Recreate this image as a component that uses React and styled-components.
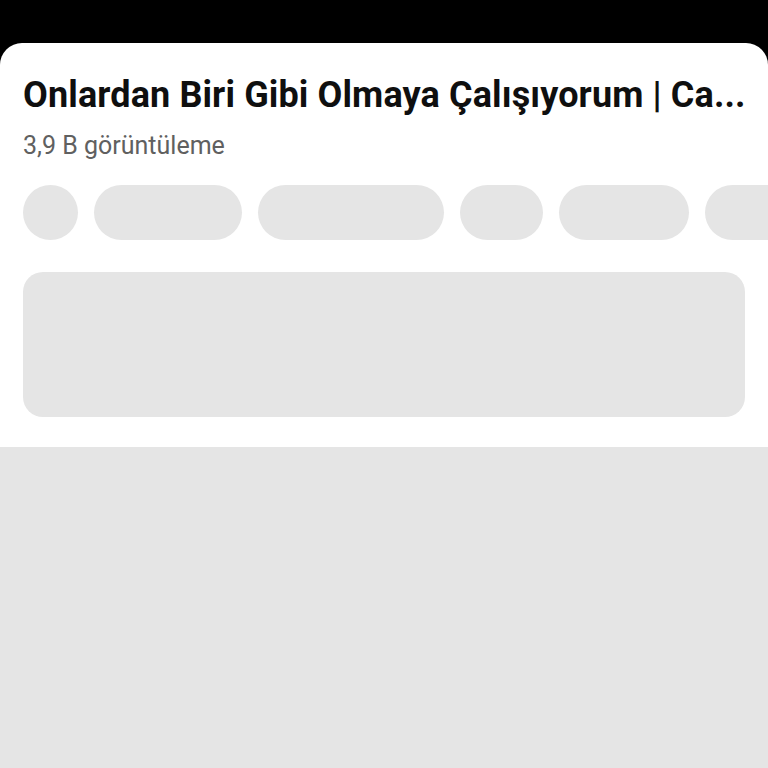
import React from 'react';
import styled, { createGlobalStyle } from 'styled-components';

const GlobalStyle = createGlobalStyle`
  html, body {
    margin: 0;
    padding: 0;
    background: #000;
  }
  body {
    font-family: Roboto, "Noto Sans", sans-serif;
  }
`;

const chips = [55, 148, 186, 83, 130, 120];

export default function App() {
  return (
    <>
      <GlobalStyle />
      <Screen>
        <Sheet>
          <Title>Onlardan Biri Gibi Olmaya Çalışıyorum | Ca...</Title>
          <Views>3,9 B görüntüleme</Views>
          <ChipRow>
            {chips.map((w, i) => (
              <Chip key={i} style={{ width: w }} />
            ))}
          </ChipRow>
          <Block />
        </Sheet>
        <Filler />
      </Screen>
    </>
  );
}

const Screen = styled.div`
  display: flex;
  flex-direction: column;
  height: 768px;
  padding-top: 43px;
  box-sizing: border-box;
  background: #000;
  overflow: hidden;
`;

const Sheet = styled.div`
  background: #fff;
  border-radius: 22px 22px 0 0;
  padding: 30px 0 30px 23px;
  display: flex;
  flex-direction: column;
`;

const Title = styled.h1`
  margin: 0 12px 0 0;
  font-size: 36px;
  line-height: 44px;
  font-weight: 700;
  letter-spacing: 0.12px;
  color: #0f0f0f;
  white-space: nowrap;
`;

const Views = styled.div`
  margin-top: 13px;
  font-size: 25px;
  line-height: 32px;
  color: #606060;
`;

const ChipRow = styled.div`
  display: flex;
  gap: 16px;
  margin-top: 23px;
  overflow: hidden;
`;

const Chip = styled.div`
  flex: none;
  height: 55px;
  border-radius: 28px;
  background: #e5e5e5;
`;

const Block = styled.div`
  margin: 32px 23px 0 0;
  height: 145px;
  border-radius: 20px;
  background: #e5e5e5;
`;

const Filler = styled.div`
  flex: 1;
  background: #e5e5e5;
`;
